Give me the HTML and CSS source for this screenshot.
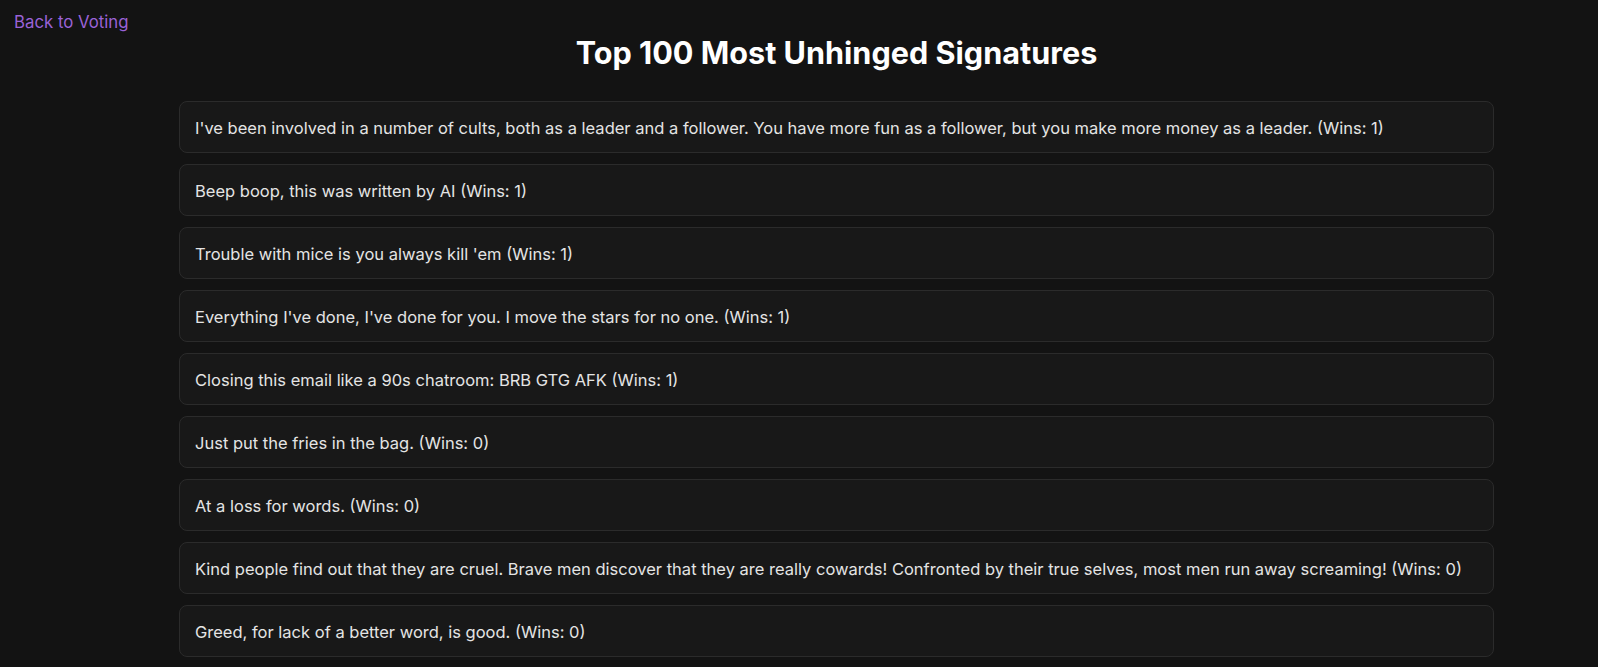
FILE: index.html
```html
<!DOCTYPE html>
<html lang="en">
<head>
<meta charset="utf-8">
<title>Top 100 Most Unhinged Signatures</title>
<link rel="stylesheet" href="styles.css">
</head>
<body>
<div class="page">
  <nav class="nav"><a class="back" href="#">Back to Voting</a></nav>
  <main class="main">
    <h1 class="title">Top 100 Most Unhinged Signatures</h1>
    <ul class="list">
      <li class="card">I've been involved in a number of cults, both as a leader and a follower. You have more fun as a follower, but you make more money as a leader. (Wins: 1)</li>
      <li class="card">Beep boop, this was written by AI (Wins: 1)</li>
      <li class="card">Trouble with mice is you always kill 'em (Wins: 1)</li>
      <li class="card">Everything I've done, I've done for you. I move the stars for no one. (Wins: 1)</li>
      <li class="card">Closing this email like a 90s chatroom: BRB GTG AFK (Wins: 1)</li>
      <li class="card">Just put the fries in the bag. (Wins: 0)</li>
      <li class="card">At a loss for words. (Wins: 0)</li>
      <li class="card">Kind people find out that they are cruel. Brave men discover that they are really cowards! Confronted by their true selves, most men run away screaming! (Wins: 0)</li>
      <li class="card">Greed, for lack of a better word, is good. (Wins: 0)</li>
    </ul>
  </main>
</div>
</body>
</html>
```
FILE: styles.css
```css
html, body {
  margin: 0;
  padding: 0;
  background: #131313;
  color: #e2e2e2;
  font-family: Inter, "Noto Sans", "Liberation Sans", sans-serif;
}
.page {
  display: flex;
  align-items: flex-start;
}
.nav {
  width: 179px;
  flex: none;
  padding: 12px 0 0 14px;
  box-sizing: border-box;
}
.back {
  color: #9a62d6;
  text-decoration: none;
  font-size: 16.8px;
  line-height: 21px;
}
.main {
  width: 1315px;
  flex: none;
}
.title {
  margin: 35px 0 30px;
  text-align: center;
  color: #ffffff;
  font-size: 30.6px;
  line-height: 36px;
  font-weight: 700;
}
.list {
  list-style: none;
  margin: 0;
  padding: 0;
  display: flex;
  flex-direction: column;
  gap: 11px;
}
.card {
  background: #181818;
  border: 1px solid #2b2b2b;
  border-radius: 8px;
  padding: 16px 15px 14px;
  font-size: 16.5px;
  line-height: 20px;
  color: #e4e4e4;
}
```
